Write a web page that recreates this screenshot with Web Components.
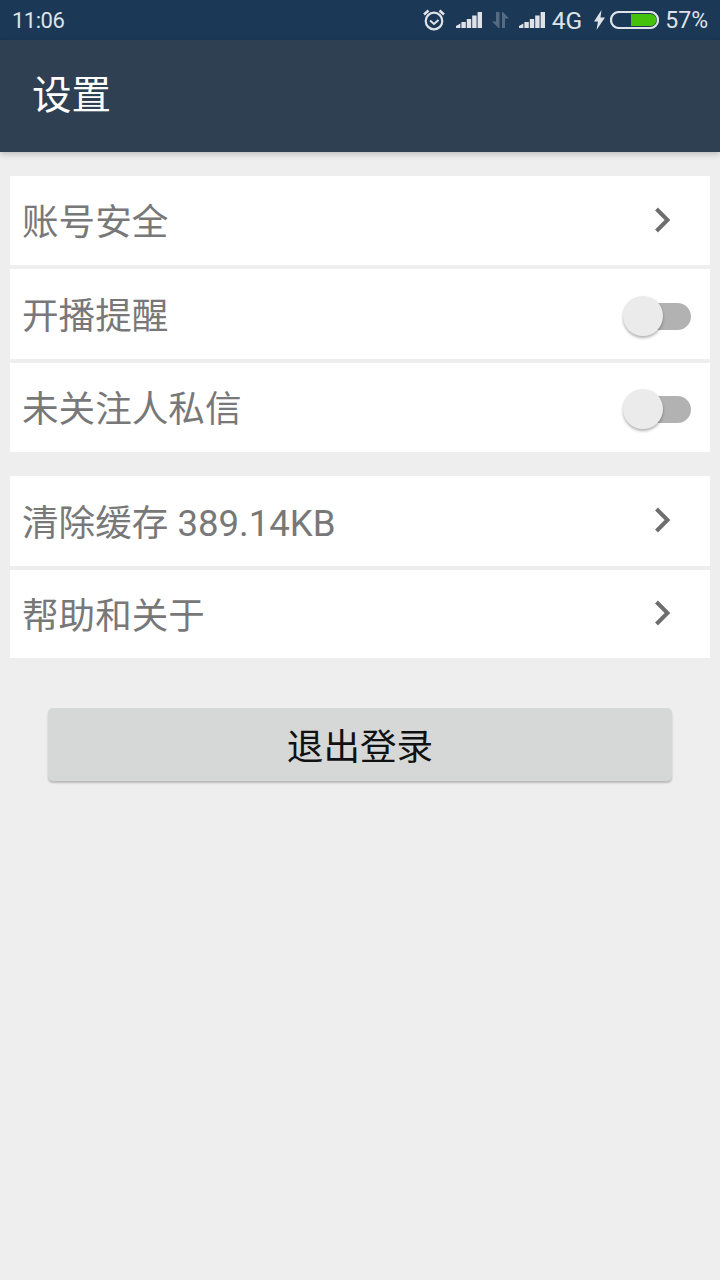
<!DOCTYPE html>
<html lang="zh">
<head>
<meta charset="utf-8">
<title>设置</title>
<style>
    html, body {
        margin: 0;
        height: 100%;
        background: #eeeeee;
        font-family: Roboto, "Noto Sans CJK SC", sans-serif;
    }
    body {
        display: flex;
        flex-direction: column;
        width: 720px;
        height: 1280px;
        overflow: hidden;
    }
</style>
</head>
<body>
    <status-bar></status-bar>
    <app-bar>设置</app-bar>
    <setting-group style="margin-top: 24px">
        <setting-row height="89"><span>账号安全</span><row-chevron slot="end"></row-chevron></setting-row>
        <setting-row height="90"><span>开播提醒</span><row-switch slot="end"></row-switch></setting-row>
        <setting-row height="89"><span>未关注人私信</span><row-switch slot="end"></row-switch></setting-row>
    </setting-group>
    <setting-group style="margin-top: 24px">
        <setting-row height="90"><span>清除缓存 389.14KB</span><row-chevron slot="end"></row-chevron></setting-row>
        <setting-row height="88"><span>帮助和关于</span><row-chevron slot="end"></row-chevron></setting-row>
    </setting-group>
    <logout-button>退出登录</logout-button>

<script>
const SIGNAL_BARS = `
    <path d="M0 15L4.400 12.500V17H0zM5.400 11h4.400v6H5.400zM10.800 8h4.400v9h-4.400zM16.200 4.500h4.400V17h-4.400zM21.600 1H26v16h-4.400z"/>
`;

class StatusBar extends HTMLElement {
    constructor() {
        super();
        this.attachShadow({ mode: "open" });
        this.shadowRoot.innerHTML = `
            <style>
                :host {
                    display: flex;
                    align-items: center;
                    justify-content: space-between;
                    height: 40px;
                    flex: none;
                    padding: 0 12px;
                    box-sizing: border-box;
                    background: #1b3857;
                    color: #dfe3e8;
                    font: 22px Roboto, sans-serif;
                }
                .time { letter-spacing: -0.5px; }
                .icons {
                    display: flex;
                    align-items: center;
                }
                .icons span { font-size: 23px; }
                .icons .net { font-size: 24.500px; margin-right: 12px; }
                svg { display: block; flex: none; }
            </style>
            <span class="time">11:06</span>
            <div class="icons">
                <svg width="24" height="24" viewBox="0 0 24 24" fill="none" stroke="#dfe3e8" style="margin-right:10px">
                    <circle cx="12" cy="13" r="8.300" stroke-width="2.200"/>
                    <path d="M8 12.500l4 3.500 4.500-4" stroke-width="2"/>
                    <path d="M2 6.500L6.500 2.500M22 6.500L17.500 2.500" stroke-width="2.600"/>
                </svg>
                <svg width="26" height="18" viewBox="0 0 26 18" fill="#dfe3e8" style="margin:0 10px 1px 0">${SIGNAL_BARS}</svg>
                <svg width="17" height="18" viewBox="0 0 17 18" fill="#566b82" style="margin:0 10px 1px 0">
                    <path d="M4 1h3.500v16H6.500L0 10.500h4zM10 1h1l6 6.500h-4V17h-3z"/>
                </svg>
                <svg width="26" height="18" viewBox="0 0 26 18" fill="#dfe3e8" style="margin:0 7px 1px 0">${SIGNAL_BARS}</svg>
                <span class="net">4G</span>
                <svg width="11" height="20" viewBox="0 0 11 20" fill="#dfe3e8" style="margin-right:5px">
                    <path d="M7.500 0L0 11.500h4L2.500 20 11 7.500H6.500z"/>
                </svg>
                <svg width="49" height="18" viewBox="0 0 49 18" style="margin-right:6px">
                    <rect x="1" y="1" width="47" height="16" rx="8" fill="#1b3857" stroke="#dfe3e8" stroke-width="2.200"/>
                    <path d="M21 3h19.500a6 6 0 0 1 0 12H21z" fill="#45c10c"/>
                </svg>
                <span>57%</span>
            </div>
        `;
    }
}

class AppBar extends HTMLElement {
    constructor() {
        super();
        this.attachShadow({ mode: "open" });
        this.shadowRoot.innerHTML = `
            <style>
                :host {
                    display: flex;
                    align-items: center;
                    height: 112px;
                    flex: none;
                    padding: 0 32px 9px;
                    box-sizing: border-box;
                    background: #2f4052;
                    color: #ffffff;
                    font: 39.500px "Noto Sans CJK SC", sans-serif;
                    box-shadow: 0 2px 6px rgba(0, 0, 0, 0.22);
                    position: relative;
                }
            </style>
            <slot></slot>
        `;
    }
}

class SettingGroup extends HTMLElement {
    constructor() {
        super();
        this.attachShadow({ mode: "open" });
        this.shadowRoot.innerHTML = `
            <style>
                :host {
                    display: flex;
                    flex-direction: column;
                    gap: 4px;
                    margin: 0 10px;
                    flex: none;
                }
            </style>
            <slot></slot>
        `;
    }
}

class SettingRow extends HTMLElement {
    constructor() {
        super();
        this.attachShadow({ mode: "open" });
        this.shadowRoot.innerHTML = `
            <style>
                :host {
                    display: flex;
                    align-items: center;
                    justify-content: space-between;
                    box-sizing: border-box;
                    padding: 0 18px 0 12px;
                    background: #ffffff;
                    color: #787878;
                    font: 36.600px Roboto, "Noto Sans CJK SC", sans-serif;
                }
                ::slotted(span) { margin-bottom: 2px; }
            </style>
            <slot></slot>
            <slot name="end"></slot>
        `;
    }

    connectedCallback() {
        this.style.height = (this.getAttribute("height") || "89") + "px";
    }
}

class RowChevron extends HTMLElement {
    constructor() {
        super();
        this.attachShadow({ mode: "open" });
        this.shadowRoot.innerHTML = `
            <style>
                :host {
                    display: block;
                    width: 20px;
                    height: 26px;
                    margin: 0 20px 2px 0;
                }
                svg { display: block; }
            </style>
            <svg width="20" height="26" viewBox="0 0 20 26" fill="none" stroke="#6e6e6e" stroke-width="4">
                <path d="M4.500 2l11 11-11 11"/>
            </svg>
        `;
    }
}

class RowSwitch extends HTMLElement {
    constructor() {
        super();
        this.attachShadow({ mode: "open" });
        this.shadowRoot.innerHTML = `
            <style>
                :host {
                    display: block;
                    position: relative;
                    width: 68px;
                    height: 40px;
                    margin-top: 3px;
                }
                .track {
                    position: absolute;
                    left: 12px;
                    right: 1px;
                    top: 7px;
                    height: 27px;
                    border-radius: 14px;
                    background: #b2b2b2;
                }
                .thumb {
                    position: absolute;
                    left: -1px;
                    top: 0;
                    width: 40px;
                    height: 40px;
                    border-radius: 50%;
                    background: #ebebeb;
                    box-shadow: 0 2px 3px rgba(0, 0, 0, 0.3);
                }
            </style>
            <div class="track"></div>
            <div class="thumb"></div>
        `;
    }
}

class LogoutButton extends HTMLElement {
    constructor() {
        super();
        this.attachShadow({ mode: "open" });
        this.shadowRoot.innerHTML = `
            <style>
                :host {
                    display: flex;
                    align-items: center;
                    justify-content: center;
                    flex: none;
                    height: 73px;
                    margin: 50px 48px 0;
                    border-radius: 5px;
                    background: #d6d8d7;
                    color: #111111;
                    font: 36.600px "Noto Sans CJK SC", sans-serif;
                    box-shadow: 0 2px 2px rgba(0, 0, 0, 0.22);
                }
            </style>
            <slot></slot>
        `;
    }
}

customElements.define("status-bar", StatusBar);
customElements.define("app-bar", AppBar);
customElements.define("setting-group", SettingGroup);
customElements.define("setting-row", SettingRow);
customElements.define("row-chevron", RowChevron);
customElements.define("row-switch", RowSwitch);
customElements.define("logout-button", LogoutButton);
</script>
</body>
</html>
